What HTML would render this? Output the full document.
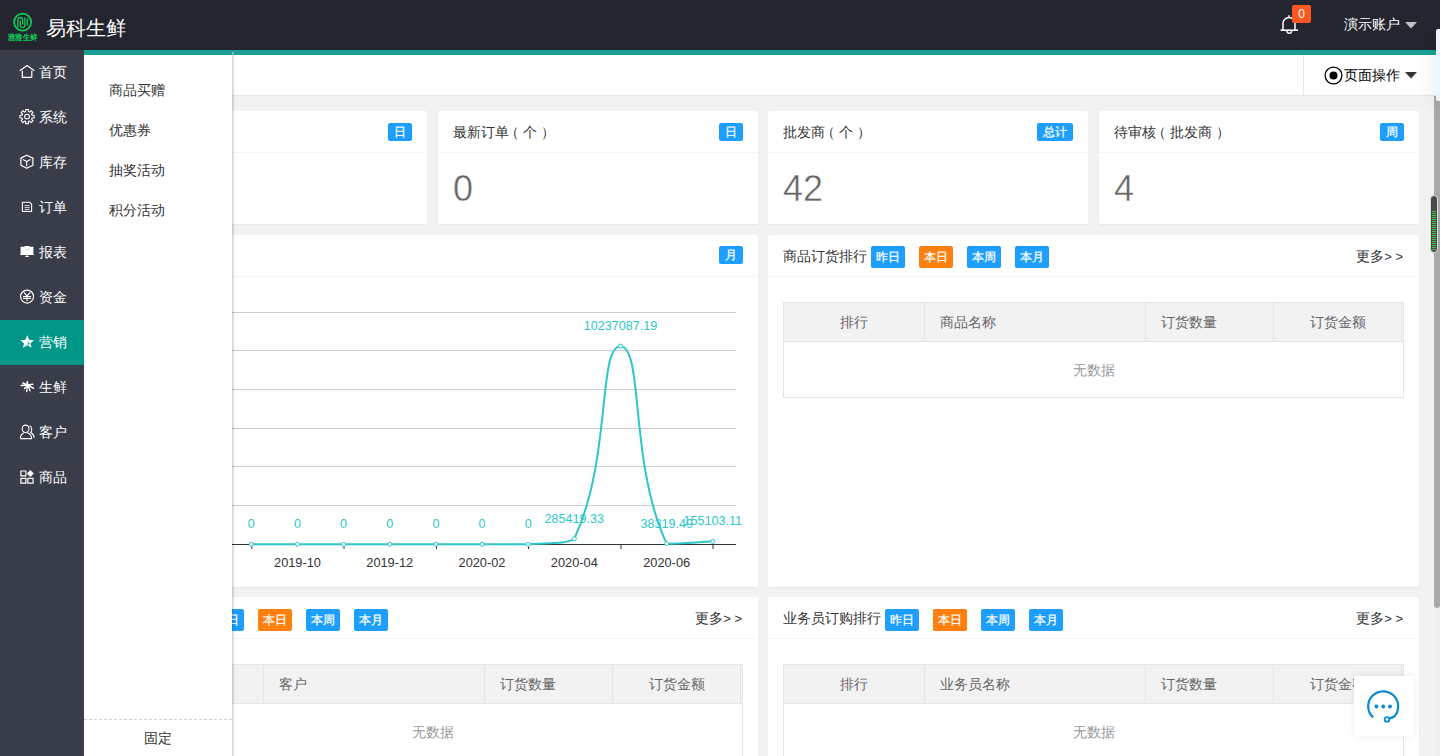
<!DOCTYPE html>
<html><head><meta charset="utf-8">
<style>
*{margin:0;padding:0;box-sizing:border-box}
html,body{width:1440px;height:756px;overflow:hidden;background:#f2f2f2;font-family:"Liberation Sans",sans-serif;font-size:14px;color:#333}
.abs{position:absolute}
.hdr{left:0;top:0;width:1440px;height:50px;background:#23262e}
.side{left:0;top:50px;width:84px;height:706px;background:#393d49}
.nav{position:absolute;left:0;width:84px;height:45px;color:#fff}
.nav.on{background:#009688}
.nav span{position:absolute;left:39px;top:0;line-height:45px;font-size:14px}
.teal{left:84px;top:50px;width:1352px;height:5px;background:#1aa094}
.tabbar{left:84px;top:55px;width:1352px;height:41px;background:#fff;border-bottom:1px solid #e6e6e6}
.card{position:absolute;background:#fff;border-radius:2px;box-shadow:0 1px 2px 0 rgba(0,0,0,.05)}
.ch{position:absolute;left:0;top:0;right:0;height:42px;border-bottom:1px solid #f6f6f6}
.ct{position:absolute;left:15px;top:0;line-height:42px;font-size:14px;color:#333;white-space:nowrap}
.bdg{position:absolute;top:12px;height:18px;line-height:18px;padding:0 6px;font-size:12px;color:#fff;background:#1e9fff;border-radius:2px;white-space:nowrap;-webkit-text-stroke:0.25px #fff}
.big{position:absolute;left:15px;top:60px;font-size:36px;line-height:36px;color:#666;-webkit-text-stroke:0.45px #fff}
.btn{position:absolute;top:11px;width:34px;height:22px;line-height:22px;text-align:center;font-size:12px;color:#fff;background:#1e9fff;border-radius:2px;-webkit-text-stroke:0.25px #fff}
.btn.o{background:#ff7f0f}
.more{position:absolute;top:0;line-height:42px;font-size:14px;color:#333}
.tbl{position:absolute;border:1px solid #e6e6e6}
.th{position:absolute;left:0;top:0;right:0;height:39px;background:#f2f2f2;border-bottom:1px solid #e6e6e6}
.th div{position:absolute;top:0;height:38px;line-height:38px;color:#666;font-size:14px;border-right:1px solid #e6e6e6}
.nodata{position:absolute;left:0;right:0;margin-top:1px;text-align:center;color:#999;font-size:14px}
.sub{left:84px;top:55px;width:148px;height:701px;background:#fff;}
.sub .it{position:absolute;left:25px;margin-top:1px;line-height:20px;font-size:14px;color:#333}
</style></head><body>

<!-- header -->
<div class="abs hdr">
  <svg class="abs" style="left:0;top:0" width="44" height="44" viewBox="0 0 44 44">
    <circle cx="22.6" cy="22.2" r="8.5" fill="none" stroke="#12c95a" stroke-width="1.8"/>
    <g fill="none" stroke="#12c95a" stroke-width="1.3">
      <path d="M17.9,27.6 V19.8 Q17.9,17.5 20.3,17.5 Q22.6,17.5 22.6,19.8 V24.6"/>
      <path d="M20.3,20.4 V25.3 Q20.3,27.6 22.6,27.6 Q24.9,27.6 24.9,25.3 V17.2"/>
      <path d="M27.3,18.4 V25.8"/>
    </g>
    <g transform="translate(7.8,34) scale(0.75,0.8)"><text x="0" y="7.5" font-size="10" font-weight="bold" fill="#12c95a" textLength="40" lengthAdjust="spacingAndGlyphs">雅雅生鲜</text></g>
  </svg>
  <div class="abs" style="left:46px;top:15px;font-size:20px;line-height:26px;color:#fff">易科生鲜</div>
  <!-- bell -->
  <svg class="abs" style="left:1279px;top:14px" width="21" height="21" viewBox="0 0 21 21">
    <path d="M4,16 V9.5 a6,6 0 0 1 12,0 V16 M10,1.3 V3.6" fill="none" stroke="#fff" stroke-width="1.5"/>
    <path d="M1.5,16.2 H19" stroke="#fff" stroke-width="1.6"/>
    <path d="M8,17 a2.3,2.3 0 0 0 4.6,0" fill="none" stroke="#fff" stroke-width="1.4"/>
  </svg>
  <div class="abs" style="left:1292px;top:5px;width:19px;height:18px;background:#ff5722;border-radius:2px;color:#fff;font-size:12px;line-height:18px;text-align:center">0</div>
  <div class="abs" style="left:1344px;top:14px;font-size:14px;line-height:20px;color:#fff">演示账户</div>
  <svg class="abs" style="left:1405px;top:22px" width="12" height="7" viewBox="0 0 12 7"><path d="M0,0 H12 L6,6.5 Z" fill="#c2c2c2"/></svg>
</div>

<!-- side nav -->
<div class="abs side">
  <div class="nav" style="top:0"><span>首页</span></div>
  <div class="nav" style="top:45px"><span>系统</span></div>
  <div class="nav" style="top:90px"><span>库存</span></div>
  <div class="nav" style="top:135px"><span>订单</span></div>
  <div class="nav" style="top:180px"><span>报表</span></div>
  <div class="nav" style="top:225px"><span>资金</span></div>
  <div class="nav on" style="top:270px"><span>营销</span></div>
  <div class="nav" style="top:315px"><span>生鲜</span></div>
  <div class="nav" style="top:360px"><span>客户</span></div>
  <div class="nav" style="top:405px"><span>商品</span></div>
</div>
<svg class="abs" style="left:0;top:0" width="84" height="500" viewBox="0 0 84 500">
  <g fill="none" stroke="#fff" stroke-width="1.2" stroke-linejoin="round">
    <path d="M19.8,70.8 L27.05,65.6 L34.3,70.8 M22.3,70.8 V77.3 H31.8 V70.8"/>
    <path stroke-width="1.1" d="M25.70,111.58 L25.68,109.53 L28.42,109.53 L28.40,111.58 L29.65,112.10 L31.08,110.63 L33.02,112.57 L31.55,114.00 L32.07,115.25 L34.12,115.23 L34.12,117.97 L32.07,117.95 L31.55,119.20 L33.02,120.63 L31.08,122.57 L29.65,121.10 L28.40,121.62 L28.42,123.67 L25.68,123.67 L25.70,121.62 L24.45,121.10 L23.02,122.57 L21.08,120.63 L22.55,119.20 L22.03,117.95 L19.98,117.97 L19.98,115.23 L22.03,115.25 L22.55,114.00 L21.08,112.57 L23.02,110.63 L24.45,112.10Z"/>
    <circle cx="27.05" cy="116.6" r="2.4" stroke-width="1.1"/>
    <path d="M26.7,155.2 L32.9,158.1 V165.2 L26.7,168.3 L20.9,165.2 V158.1 Z"/>
    <path stroke-width="1.1" d="M22.9,159.6 L26.7,161.6 L30.6,159.6 M26.7,161.6 V166.2"/>
    <path stroke-width="1.1" d="M22.4,202.3 H29.8 L31.6,204.1 V211.5 H22.4 Z"/><path stroke-width="0.8" d="M24.6,205.6 H29.6 M24.6,207.6 H29.6 M24.6,209.6 H29.6"/>
    <circle cx="27.05" cy="296.6" r="6.5" stroke-width="1.2"/>
    <path stroke-width="1.1" d="M23.9,292.3 L27.05,295.9 L30.2,292.3 M23,296.6 H31.1 M23,298.5 H31.1 M27.05,295.9 V300.9"/>
    <ellipse cx="25.6" cy="428.8" rx="3.4" ry="3.7" stroke-width="1.1"/>
    <path stroke-width="1.1" d="M20.4,438.6 C20.4,435.5 22.3,433.3 24.2,432.7 M27.2,432.7 C29.5,433.3 31.5,435.5 31.6,438.6 H20.4"/>
    <path stroke-width="1.1" d="M29.6,425.8 C31.8,426.6 32.6,430.5 30.6,432.6 C32.6,433.6 34,435.5 34.2,437.8"/>
    <rect x="20.9" y="471" width="5" height="4.9" stroke-width="1.2"/>
    <rect x="20.9" y="478.3" width="5" height="4.9" stroke-width="1.2"/>
    <rect x="27.8" y="478.3" width="5.3" height="4.9" stroke-width="1.2"/>
  </g>
  <g fill="#fff">
    <path d="M20.6,246.8 H33.4 V254.3 H20.6 Z M24.6,246 H29.5 V247 H24.6 Z"/>
    <path d="M20.2,254 H33.8 V255 H20.2 Z M26.5,255 H27.6 V256.3 H26.5 Z M25,256.2 H29 V257.1 H25 Z"/>
    <path d="M30.4,469.9 L33.9,473.4 L30.4,476.9 L26.9,473.4 Z"/>
    <path d="M27.3,335.2 L29.2,339.8 L34,340.3 L30.4,343.5 L31.6,347.7 L27.3,345.3 L22.9,347.7 L24.1,343.5 L20.4,340.3 L25.3,339.8 Z"/>
  </g>
  <path d="M27.9,341.2 L28.5,342.6 L29.9,342.9 L28.9,343.9 L29.2,345.1 L27.9,344.5 Z" fill="#009688"/>
  <path d="M25.5,250 L27.5,249.6 L29.5,249.2" stroke="#bbb" stroke-width="0.7" fill="none"/>
  <g stroke="#fff" stroke-linecap="round" fill="none">
    <path stroke-width="1.5" d="M21.2,385.4 L27.6,385 M22.8,383 L27.6,384.8 M27.2,381.6 L27.8,384.6 M32.8,384.2 L27.8,385 M33.6,388.2 L28.2,385.6 M24.6,388.4 L27.4,385.8"/>
    <path stroke-width="1.3" d="M26.6,391.6 L27.6,386 M30,390.8 L28.3,386"/>
  </g>
</svg>
<div class="abs teal"></div>
<div class="abs tabbar">
  <div class="abs" style="left:1219px;top:0;width:1px;height:40px;background:#e6e6e6"></div>
  <svg class="abs" style="left:1240px;top:11px" width="19" height="19" viewBox="0 0 19 19"><circle cx="9.5" cy="9.5" r="8.4" fill="none" stroke="#000" stroke-width="1.3"/><circle cx="9.5" cy="9.5" r="4" fill="#000"/></svg>
  <div class="abs" style="left:1260px;top:10px;line-height:20px;font-size:14px;color:#000">页面操作</div>
  <svg class="abs" style="left:1321px;top:17px" width="12" height="7" viewBox="0 0 12 7"><path d="M0,0 H12 L6,6.5 Z" fill="#333"/></svg>
</div>

<!-- row 1 -->
<div class="card" style="left:107px;top:111px;width:320px;height:113px">
  <div class="ch"><div class="ct">最新订单<span style="position:relative;left:-4px">（</span>金额<span style="position:relative;left:3.5px">）</span></div><div class="bdg" style="right:15px">日</div></div>
  <div class="big">0.00</div>
</div>
<div class="card" style="left:438px;top:111px;width:320px;height:113px">
  <div class="ch"><div class="ct">最新订单<span style="position:relative;left:-4px">（</span>个<span style="position:relative;left:3.5px">）</span></div><div class="bdg" style="right:15px">日</div></div>
  <div class="big">0</div>
</div>
<div class="card" style="left:768px;top:111px;width:320px;height:113px">
  <div class="ch"><div class="ct">批发商<span style="position:relative;left:-4px">（</span>个<span style="position:relative;left:3.5px">）</span></div><div class="bdg" style="right:15px">总计</div></div>
  <div class="big">42</div>
</div>
<div class="card" style="left:1099px;top:111px;width:320px;height:113px">
  <div class="ch"><div class="ct">待审核<span style="position:relative;left:-4px">（</span>批发商<span style="position:relative;left:3.5px">）</span></div><div class="bdg" style="right:15px">周</div></div>
  <div class="big">4</div>
</div>

<!-- row 2 -->
<div class="card" style="left:107px;top:235px;width:651px;height:352px">
  <div class="ch"><div class="ct">订单金额统计</div><div class="bdg" style="right:15px;top:11px">月</div></div>
</div>
<svg class="abs" style="left:0;top:0" width="1440" height="756" viewBox="0 0 1440 756">
  <g stroke="#ccc" stroke-width="1">
    <path d="M180,312.5 H736 M180,350.5 H736 M180,389.5 H736 M180,428.5 H736 M180,466.5 H736 M180,505.5 H736"/>
  </g>
  <path d="M180,544.5 H736" stroke="#333" stroke-width="1"/>
  <path d="M251.8,544 V549 M344,544 V549 M436.5,544 V549 M528.5,544 V549 M621,544 V549 M713,544 V549" stroke="#333" stroke-width="1"/>
  <g font-family="Liberation Sans" font-size="12.8" fill="#333" text-anchor="middle">
    <text x="297.5" y="567">2019-10</text><text x="389.75" y="567">2019-12</text><text x="482" y="567">2020-02</text><text x="574.35" y="567">2020-04</text><text x="666.65" y="567">2020-06</text>
  </g>
  <path id="ln" d="M251.30,544.30 C251.30,544.30 274.38,544.30 297.45,544.30 C320.52,544.30 320.52,544.30 343.60,544.30 C366.68,544.30 366.68,544.30 389.75,544.30 C412.82,544.30 412.82,544.30 435.90,544.30 C458.98,544.30 458.98,544.30 482.05,544.30 C505.12,544.30 505.21,544.30 528.20,544.30 C551.36,542.91 565.58,544.30 574.35,538.77 C611.73,458.52 597.69,346.13 620.50,346.13 C643.84,347.34 629.07,464.08 666.65,543.56 C675.22,544.30 712.80,541.30 712.80,541.30" fill="none" stroke="#2ec7c9" stroke-width="2"/>
  <g fill="#fff" stroke="#2ec7c9" stroke-width="1">
    <circle cx="251.3" cy="544.3" r="2"/><circle cx="297.45" cy="544.3" r="2"/><circle cx="343.6" cy="544.3" r="2"/><circle cx="389.75" cy="544.3" r="2"/><circle cx="435.9" cy="544.3" r="2"/><circle cx="482.05" cy="544.3" r="2"/><circle cx="528.2" cy="544.3" r="2"/><circle cx="574.35" cy="538.77" r="2"/><circle cx="620.5" cy="346.13" r="2"/><circle cx="666.65" cy="543.56" r="2"/><circle cx="712.8" cy="541.3" r="2"/>
  </g>
  <g font-family="Liberation Sans" font-size="12.6" fill="#2ec7c9" text-anchor="middle">
    <text x="251.3" y="528">0</text><text x="297.45" y="528">0</text><text x="343.6" y="528">0</text><text x="389.75" y="528">0</text><text x="435.9" y="528">0</text><text x="482.05" y="528">0</text><text x="528.2" y="528">0</text>
    <text x="574.35" y="522.5">285419.33</text><text x="620.5" y="330">10237087.19</text><text x="666.65" y="527.5">38319.49</text><text x="712.8" y="525">155103.11</text>
  </g>
</svg>

<div class="card" style="left:768px;top:235px;width:651px;height:352px">
  <div class="ch"><div class="ct">商品订货排行</div>
    <div class="btn" style="left:103px">昨日</div><div class="btn o" style="left:151px">本日</div><div class="btn" style="left:199px">本周</div><div class="btn" style="left:247px">本月</div>
    <div class="more" style="right:16px">更多<span style="font-size:13px;letter-spacing:3.5px">&gt;</span><span style="font-size:13px">&gt;</span></div></div>
  <div class="tbl" style="left:15px;top:67px;width:621px;height:96px">
    <div class="th"><div style="left:0;width:141px;text-align:center">排行</div><div style="left:141px;width:221px;padding-left:15px">商品名称</div><div style="left:362px;width:128px;padding-left:15px">订货数量</div><div style="left:490px;width:128px;text-align:center">订货金额</div></div>
    <div class="nodata" style="top:39px;line-height:55px">无数据</div>
  </div>
</div>

<!-- row 3 -->
<div class="card" style="left:107px;top:597px;width:651px;height:200px">
  <div class="ch"><div class="ct">客户订货排行</div>
    <div class="btn" style="top:12px;left:103px">昨日</div><div class="btn o" style="top:12px;left:151px">本日</div><div class="btn" style="top:12px;left:199px">本周</div><div class="btn" style="top:12px;left:247px">本月</div>
    <div class="more" style="right:16px">更多<span style="font-size:13px;letter-spacing:3.5px">&gt;</span><span style="font-size:13px">&gt;</span></div></div>
  <div class="tbl" style="left:15px;top:67px;width:621px;height:96px">
    <div class="th"><div style="left:0;width:141px;text-align:center">排行</div><div style="left:141px;width:221px;padding-left:15px">客户</div><div style="left:362px;width:128px;padding-left:15px">订货数量</div><div style="left:490px;width:128px;text-align:center">订货金额</div></div>
    <div class="nodata" style="top:39px;line-height:55px">无数据</div>
  </div>
</div>
<div class="card" style="left:768px;top:597px;width:651px;height:200px">
  <div class="ch"><div class="ct">业务员订购排行</div>
    <div class="btn" style="top:12px;left:117px">昨日</div><div class="btn o" style="top:12px;left:165px">本日</div><div class="btn" style="top:12px;left:213px">本周</div><div class="btn" style="top:12px;left:261px">本月</div>
    <div class="more" style="right:16px">更多<span style="font-size:13px;letter-spacing:3.5px">&gt;</span><span style="font-size:13px">&gt;</span></div></div>
  <div class="tbl" style="left:15px;top:67px;width:621px;height:96px">
    <div class="th"><div style="left:0;width:141px;text-align:center">排行</div><div style="left:141px;width:221px;padding-left:15px">业务员名称</div><div style="left:362px;width:128px;padding-left:15px">订货数量</div><div style="left:490px;width:128px;text-align:center">订货金额</div></div>
    <div class="nodata" style="top:39px;line-height:55px">无数据</div>
  </div>
</div>

<!-- submenu -->
<div class="abs sub">
  <div class="it" style="top:24px">商品买赠</div>
  <div class="it" style="top:64px">优惠券</div>
  <div class="it" style="top:104px">抽奖活动</div>
  <div class="it" style="top:144px">积分活动</div>
  <div class="abs" style="left:0;top:664px;width:148px;border-top:1px dashed #d2d2d2"></div>
  <div class="abs" style="left:0;top:673px;width:148px;text-align:center;line-height:20px;font-size:14px;color:#333">固定</div>
</div>

<div class="abs" style="left:232px;top:52px;width:2px;height:3px;background:linear-gradient(to right,rgba(230,230,230,.55),rgba(230,230,230,.15))"></div>
<div class="abs" style="left:232px;top:55px;width:4px;height:701px;background:linear-gradient(to right,rgba(0,0,0,.2),rgba(0,0,0,.09) 35%,rgba(0,0,0,.03) 70%,rgba(0,0,0,0))"></div>
<!-- scrollbar -->
<div class="abs" style="left:1434px;top:96px;width:6px;height:660px;background:#efefef"></div>
<div class="abs" style="left:1434px;top:96px;width:6px;height:512px;background:#a9a9a9;border-radius:0 0 3px 3px"></div>
<div class="abs" style="left:1430px;top:195px;width:8px;height:58px;border-radius:4px;background:#4a4a4a;border:1px solid #ddd"></div>
<div class="abs" style="left:1432px;top:211px;width:4px;height:39px;background:repeating-linear-gradient(#3ec83e 0 1px,#4a4a4a 1px 2px)"></div>
<div class="abs" style="left:1436px;top:29px;width:4px;height:72px;background:#eef4fb;border-radius:2px 0 0 2px;box-shadow:-3px 5px 14px rgba(0,0,0,.15)"></div>

<!-- chat -->
<div class="abs" style="left:1354px;top:676px;width:60px;height:60px;background:#fff;box-shadow:0 0 8px rgba(0,0,0,.08)">
  <svg class="abs" style="left:0;top:0" width="60" height="60" viewBox="0 0 60 60">
    <path d="M19.1,41.4 A15,15 0 1 1 39.8,40.9 L35.2,42.6" fill="none" stroke="#0a8bd0" stroke-width="2.2"/>
    <circle cx="33" cy="43.4" r="2.3" fill="#fff" stroke="#0a8bd0" stroke-width="1.8"/>
    <circle cx="22.4" cy="30.5" r="1.9" fill="#0a8bd0"/><circle cx="29.2" cy="30.5" r="1.9" fill="#0a8bd0"/><circle cx="36" cy="30.5" r="1.9" fill="#0a8bd0"/>
  </svg>
</div>

</body></html>
